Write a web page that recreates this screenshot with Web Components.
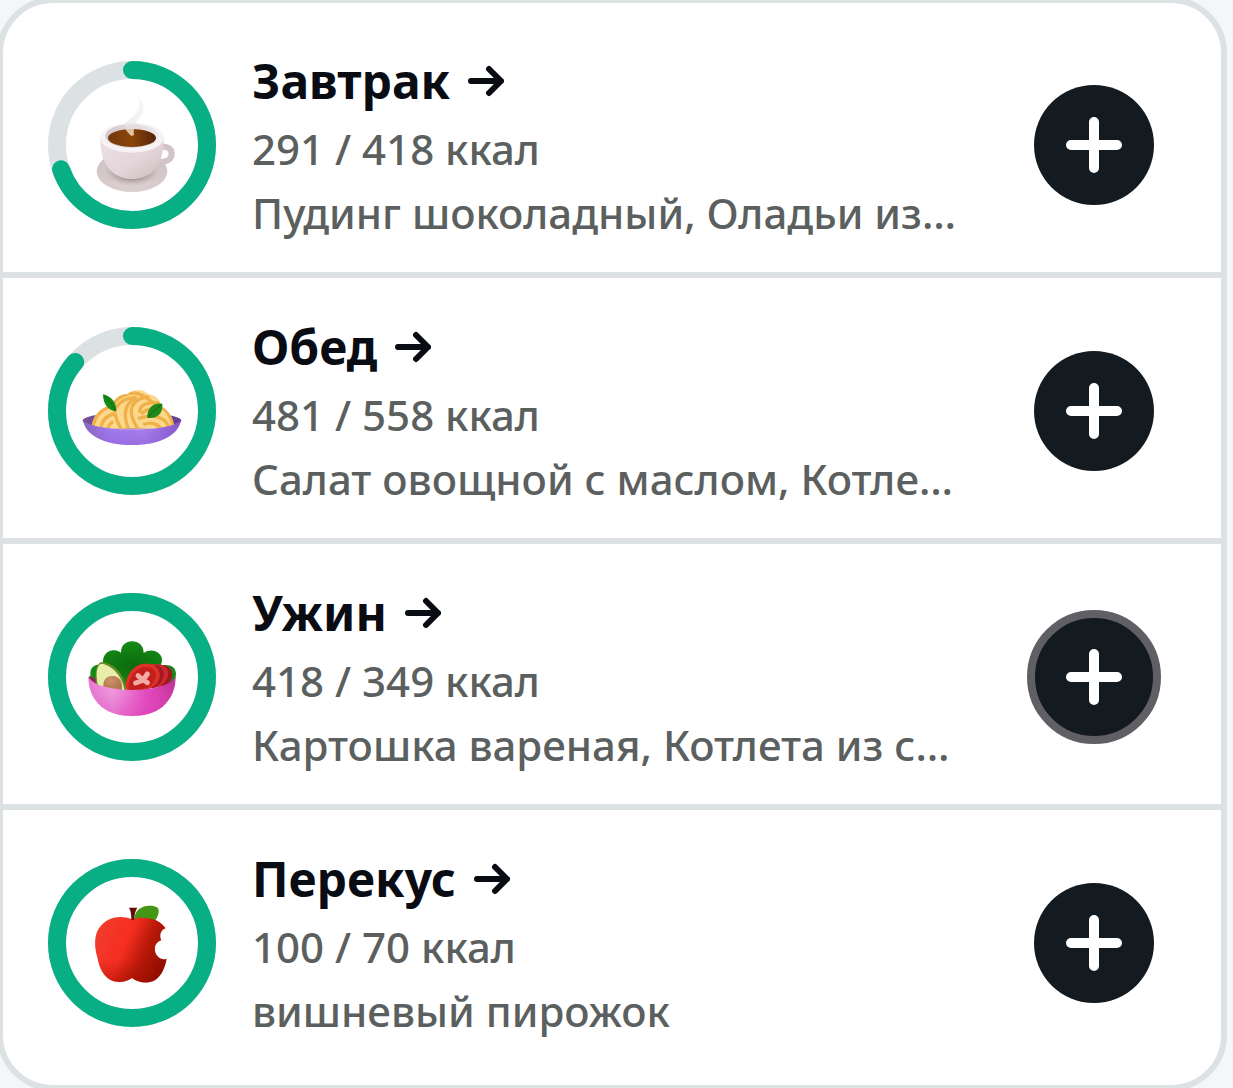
<!DOCTYPE html>
<html lang="ru">
<head>
<meta charset="utf-8">
<meta name="viewport" content="width=device-width, initial-scale=1">
<title>Питание</title>
<style>
  html { background: #f4f6f9; }
  body {
    margin: 0;
    overflow: hidden;
    font-family: "Noto Sans", "Open Sans", sans-serif;
    --color-fg: #0a0c14;
    --color-muted: #5b605f;
    --color-line: #dce1e3;
    --color-accent: #08ae84;
    --color-action: #131a20;
    --color-focus: #5f5f64;
  }
</style>
</head>
<body>
<meal-list>
  <meal-row icon="coffee" eaten="291" goal="418">
    Завтрак
    <span slot="foods">Пудинг шоколадный, Оладьи из…</span>
  </meal-row>
  <meal-row icon="pasta" eaten="481" goal="558">
    Обед
    <span slot="foods">Салат овощной с маслом, Котле…</span>
  </meal-row>
  <meal-row icon="salad" eaten="418" goal="349" active>
    Ужин
    <span slot="foods">Картошка вареная, Котлета из с…</span>
  </meal-row>
  <meal-row icon="apple" eaten="100" goal="70">
    Перекус
    <span slot="foods">вишневый пирожок</span>
  </meal-row>
</meal-list>

<script>
// Icons share the ring's coordinate system, centred on 300,285
const ICONS = {
  coffee: `
    <defs>
      <linearGradient id="saucer" x1="0" y1="0" x2="0" y2="1">
        <stop offset="0" stop-color="#cbbfc0"></stop><stop offset="1" stop-color="#dccfd1"></stop>
      </linearGradient>
      <radialGradient id="shade"><stop offset="0" stop-color="#8c7b7c"></stop><stop offset=".5" stop-color="#a39495"></stop><stop offset="1" stop-color="#c9bcbd" stop-opacity="0"></stop></radialGradient>
      <linearGradient id="cup" x1="0" y1="0" x2="1" y2="1">
        <stop offset="0" stop-color="#eee2e6"></stop><stop offset=".55" stop-color="#e3d5d9"></stop><stop offset="1" stop-color="#cdbcc0"></stop>
      </linearGradient>
      <linearGradient id="inside" x1="0" y1="0" x2="1" y2="0">
        <stop offset="0" stop-color="#d3c8cb"></stop><stop offset="1" stop-color="#eee9eb"></stop>
      </linearGradient>
      <linearGradient id="brew" x1="0" y1="0" x2="1" y2="0">
        <stop offset="0" stop-color="#74390d"></stop><stop offset=".5" stop-color="#8b4508"></stop><stop offset="1" stop-color="#542408"></stop>
      </linearGradient>
      <linearGradient id="steam" x1="0" y1="0" x2="0" y2="1">
        <stop offset="0" stop-color="#f2f2f2" stop-opacity=".6"></stop><stop offset=".7" stop-color="#ebe8e8" stop-opacity=".7"></stop><stop offset="1" stop-color="#e5c7a0"></stop>
      </linearGradient>
    </defs>
    <ellipse cx="300" cy="364" rx="106" ry="62" fill="url(#saucer)"></ellipse>
    <ellipse cx="300" cy="366" rx="84" ry="42" fill="url(#shade)"></ellipse>
    <path d="M384 292c20-6 36 3 35 22-2 16-18 24-44 21" fill="none" stroke="#d3c4c8" stroke-width="18"></path>
    <path d="M205 262c-1 40 7 74 29 97 18 19 39 28 66 28s49-9 67-28c21-23 29-57 28-97z" fill="url(#cup)"></path>
    <ellipse cx="300" cy="263" rx="95" ry="45" fill="#f7f3f5"></ellipse>
    <ellipse cx="300" cy="258" rx="80" ry="36" fill="url(#inside)"></ellipse>
    <ellipse cx="300" cy="264" rx="72" ry="27" fill="url(#brew)"></ellipse>
    <path d="M317 138c20 18 22 43 10 59-14 18-25 34-21 58l-8 3c-8-8-17-15-18-28-2-18 16-22 27-34 16-17 18-35 10-58z" fill="url(#steam)"></path>`,

  pasta: `
    <defs>
      <linearGradient id="bowl" x1="0" y1="0" x2="1" y2="0">
        <stop offset="0" stop-color="#8966bd"></stop><stop offset=".28" stop-color="#a880ef"></stop><stop offset=".62" stop-color="#b087f3"></stop><stop offset="1" stop-color="#8156c7"></stop>
      </linearGradient>
      <linearGradient id="lip" x1="0" y1="0" x2="0" y2="1">
        <stop offset="0" stop-color="#8a5fd6" stop-opacity="0"></stop><stop offset="1" stop-color="#8a5fd6" stop-opacity=".6"></stop>
      </linearGradient>
      <linearGradient id="well" x1="0" y1="0" x2="1" y2="0">
        <stop offset="0" stop-color="#765096"></stop><stop offset="1" stop-color="#664191"></stop>
      </linearGradient>
      <clipPath id="heap"><path d="M178 338c2-38 26-64 60-70 10-21 26-34 49-34 15-15 48-18 62 1 25 3 37 18 37 36 26 13 39 35 41 67z"></path></clipPath>
    </defs>
    <ellipse cx="300" cy="314" rx="148" ry="25" fill="url(#well)"></ellipse>
    <g clip-path="url(#heap)" fill="none" stroke="#f0b04a" stroke-width="10">
      <path d="M160 220h280v130H160z" fill="#fcd88c" stroke="none"></path>
      <path d="M181 342c4-36 24-62 60-72M206 342c3-28 18-45 42-48M230 342c-2-10 2-20 14-24"></path>
      <path d="M240 270c22-37 62-46 90-32 26 14 40 29 58 36"></path>
      <path d="M246 290c8-30 36-46 68-45-33 14-44 46-24 95"></path>
      <path d="M250 292c2 20 10 34 18 48"></path>
      <path d="M352 243c-44 2-60 28-52 58 3 13 9 25 18 37"></path>
      <path d="M384 262c-40-8-60 6-62 28M388 283c-26-8-48-4-60 12"></path>
      <path d="M318 308c40-16 86-8 96 34M334 326c22-10 44-4 54 16"></path>
      <path d="M386 273c25 13 34 33 37 63"></path>
    </g>
    <path d="M153 311c12 17 66 29 147 29s136-11 147-29c-5 44-62 76-147 76s-142-32-147-76z" fill="url(#bowl)"></path>
    <path d="M153 311c12 17 66 29 147 29s136-11 147-29c-5 44-62 76-147 76s-142-32-147-76z" fill="url(#lip)"></path>
    <path d="M213 235c23 5 40 21 40 51-25-2-40-21-40-51z" fill="#168b18"></path>
    <path d="M216 239q21 17 34 44" fill="none" stroke="#086b12" stroke-width="3"></path>
    <path d="M391 263c-28-4-47 14-45 42 27 5 48-12 45-42z" fill="#208b1b"></path>
    <path d="M388 266q-20 16-39 36" fill="none" stroke="#0b6213" stroke-width="3"></path>`,

  salad: `
    <defs>
      <linearGradient id="dish" x1="0" y1="0" x2="1" y2="0">
        <stop offset="0" stop-color="#e777cf"></stop><stop offset=".28" stop-color="#f0a0e1"></stop><stop offset=".66" stop-color="#e34abe"></stop><stop offset="1" stop-color="#c43098"></stop>
      </linearGradient>
      <linearGradient id="depth" x1="0" y1="0" x2="0" y2="1">
        <stop offset=".2" stop-color="#e45dc2" stop-opacity="0"></stop><stop offset="1" stop-color="#d93bb5" stop-opacity=".5"></stop>
      </linearGradient>
      <radialGradient id="leaf"><stop offset="0" stop-color="#0a6a0d"></stop><stop offset="1" stop-color="#168b16"></stop></radialGradient>
      <radialGradient id="pit" cx=".4" cy=".35"><stop offset="0" stop-color="#cf946c"></stop><stop offset="1" stop-color="#b27a50"></stop></radialGradient>
    </defs>
    <ellipse cx="300" cy="290" rx="130" ry="32" fill="#8d245e"></ellipse>
    <path d="M177 286c-6-21 3-37 22-38 9 0 15 2 19 7-13-23 1-48 25-50 10-1 18 2 24 7 0-22 14-34 33-34 20 0 35 13 35 35 26-17 54-1 55 20 0 6-2 13-5 18 28-6 47 4 47 25 0 9-4 17-8 22l-124 24z" fill="url(#leaf)"></path>
    <path d="M372 248c27-2 49 8 49 30 0 14-8 25-24 34h-36z" fill="#a61620"></path>
    <path d="M356 246c34-2 52 8 52 28 0 18-12 33-29 42h-46z" fill="#c92d2b"></path>
    <path d="M368 250c20 2 29 12 27 28-3 20-14 32-32 40h-30z" fill="#a3182a"></path>
    <path d="M280 325c-2-49 31-83 66-80 26 2 39 17 37 39-3 21-20 34-44 40z" fill="#df3026"></path>
    <path d="M289 324c-2-39 25-69 54-69 21 0 31 12 28 30-4 23-25 36-51 39z" fill="#c3201d"></path>
    <path d="M329 291l-11-10M337 289l9-13M327 297l-16 6M338 297l8 5" fill="none" stroke="#f2aaa2" stroke-width="15" stroke-linecap="round"></path>
    <path d="M194 318c-9-43 0-77 16-78 33 2 69 37 73 84z" fill="#668b25"></path>
    <path d="M200 318c-12-42-5-72 9-73 30 4 63 37 68 80z" fill="#e9edaa"></path>
    <path d="M214 318c-2-24 8-36 28-36 21 1 31 17 28 44z" fill="url(#pit)"></path>
    <path d="M170 283c5 23 59 41 130 41 72 0 125-18 130-41 3 34-11 68-39 92-23 18-54 27-91 27s-68-9-91-27c-28-24-42-58-39-92z" fill="url(#dish)"></path>
    <path d="M170 283c5 23 59 41 130 41 72 0 125-18 130-41 3 34-11 68-39 92-23 18-54 27-91 27s-68-9-91-27c-28-24-42-58-39-92z" fill="url(#depth)"></path>`,

  apple: `
    <defs>
      <linearGradient id="skin" x1="0" y1=".25" x2="1" y2=".65">
        <stop offset="0" stop-color="#f23c2d"></stop><stop offset=".42" stop-color="#f52e20"></stop><stop offset=".69" stop-color="#b91909"></stop><stop offset="1" stop-color="#8d0e00"></stop>
      </linearGradient>
      <linearGradient id="base" x1="0" y1="0" x2="0" y2="1">
        <stop offset=".65" stop-color="#9d0d00" stop-opacity="0"></stop><stop offset="1" stop-color="#9d0d00" stop-opacity=".45"></stop>
      </linearGradient>
    </defs>
    <path d="M307 215c-1-27 22-43 46-42 17 0 27 5 27 12 1 15-6 26-12 35z" fill="#449615"></path>
    <path d="M300 214c17-7 40-6 60-1 17 4 31 13 41 28-15 4-20 22-13 36-24 6-25 38-8 51 7 6 16 7 24 4-5 31-19 56-38 66-20 9-48 7-66-8-19 13-46 16-66 5-23-13-33-39-38-67-10-32-9-64 3-84 22-37 64-45 101-30z" fill="url(#skin)"></path>
    <path d="M300 214c17-7 40-6 60-1 17 4 31 13 41 28-15 4-20 22-13 36-24 6-25 38-8 51 7 6 16 7 24 4-5 31-19 56-38 66-20 9-48 7-66-8-19 13-46 16-66 5-23-13-33-39-38-67-10-32-9-64 3-84 22-37 64-45 101-30z" fill="url(#base)"></path>
    <path d="M291 179h25c-7 10-9 22-9 37h-9c0-15-1-27-7-37z" fill="#680b08"></path>`,
}

class MealList extends HTMLElement {
  constructor() {
    super()
    this.attachShadow({ mode: 'open' })
    this.shadowRoot.innerHTML = `
      <style>
        /* the card's outline bleeds half its width past the viewport */
        :host {
          display: flex;
          flex-direction: column;
          margin: -3px 6px -3px -3px;
          padding: 9px 0 15px;
          background: #fff;
          border: 6px solid var(--color-line);
          border-radius: 56px;
        }
        ::slotted(meal-row:not(:last-child)) { border-bottom: 6px solid var(--color-line); }
      </style>
      <slot></slot>`
  }
}

class MealRing extends HTMLElement {
  constructor() {
    super()
    this.attachShadow({ mode: 'open' })
  }

  connectedCallback() {
    const share = Math.min(Number(this.getAttribute('value')), 1)
    const length = 2 * Math.PI * 225
    this.shadowRoot.innerHTML = `
      <style>
        :host { display: block; flex-shrink: 0; width: 168px; height: 168px; }
        svg { display: block; width: 100%; height: 100%; }
        .track, .bar { fill: none; stroke-width: 54; }
        .track { stroke: var(--color-line); }
        .bar { stroke: var(--color-accent); stroke-linecap: round; }
      </style>
      <svg viewBox="48 33 504 504" aria-hidden="true">
        <circle class="track" cx="300" cy="285" r="225"></circle>
        <circle class="bar" cx="300" cy="285" r="225" transform="rotate(-90 300 285)"
          stroke-dasharray="${length * share} ${length}"></circle>
        ${ICONS[this.getAttribute('icon')] ?? ''}
      </svg>`
  }
}

class AddButton extends HTMLElement {
  constructor() {
    super()
    this.attachShadow({ mode: 'open' })
  }

  connectedCallback() {
    this.shadowRoot.innerHTML = `
      <style>
        :host { display: block; flex-shrink: 0; }
        button {
          display: grid;
          place-items: center;
          width: 120px;
          height: 120px;
          padding: 0;
          border: 0;
          border-radius: 50%;
          background: var(--color-action);
          color: #fff;
          cursor: pointer;
        }
        /* the 1px inset closes the seam between the fill and the ring */
        button:focus-visible, :host([active]) button {
          outline: 8px solid var(--color-focus);
          outline-offset: -1px;
        }
        svg { width: 56px; height: 56px; }
      </style>
      <button type="button">
        <svg viewBox="0 0 56 56" fill="none" stroke="currentColor" stroke-width="10" stroke-linecap="round" aria-hidden="true">
          <path d="M28 5v46M5 28h46"></path>
        </svg>
      </button>`
    this.shadowRoot.querySelector('button').setAttribute('aria-label', this.getAttribute('label') ?? '')
  }
}

class MealRow extends HTMLElement {
  constructor() {
    super()
    this.attachShadow({ mode: 'open' })
  }

  connectedCallback() {
    const eaten = Number(this.getAttribute('eaten'))
    const goal = Number(this.getAttribute('goal'))
    this.shadowRoot.innerHTML = `
      <style>
        :host {
          display: flex;
          align-items: center;
          gap: 36px;
          padding: 36px 67px 30px 45px;
        }
        .info {
          display: flex;
          flex: 1;
          flex-direction: column;
          gap: 6px;
          min-width: 0;
        }
        h3, p { margin: 0; }
        h3 { font-size: 48px; font-weight: 700; line-height: 66px; }
        a {
          display: inline-flex;
          align-items: center;
          gap: 18px;
          color: var(--color-fg);
          text-decoration: none;
        }
        a svg { width: 36px; height: 32px; }
        p {
          overflow: hidden;
          color: var(--color-muted);
          font-size: 42px;
          font-weight: 500;
          line-height: 58px;
          text-overflow: ellipsis;
          white-space: nowrap;
        }
      </style>
      <meal-ring icon="${this.getAttribute('icon')}" value="${eaten / goal}"></meal-ring>
      <div class="info">
        <h3>
          <a href="#${this.getAttribute('icon')}">
            <span><slot></slot></span>
            <svg viewBox="0 0 36 32" fill="none" stroke="currentColor" stroke-width="6" stroke-linecap="round" stroke-linejoin="round" aria-hidden="true">
              <path d="M3 16h30M21 4l12 12-12 12"></path>
            </svg>
          </a>
        </h3>
        <p>${eaten} / ${goal} ккал</p>
        <p><slot name="foods"></slot></p>
      </div>
      <add-button label="Добавить" ${this.hasAttribute('active') ? 'active' : ''}></add-button>`
  }
}

customElements.define('meal-list', MealList)
customElements.define('meal-ring', MealRing)
customElements.define('add-button', AddButton)
customElements.define('meal-row', MealRow)
</script>
</body>
</html>
